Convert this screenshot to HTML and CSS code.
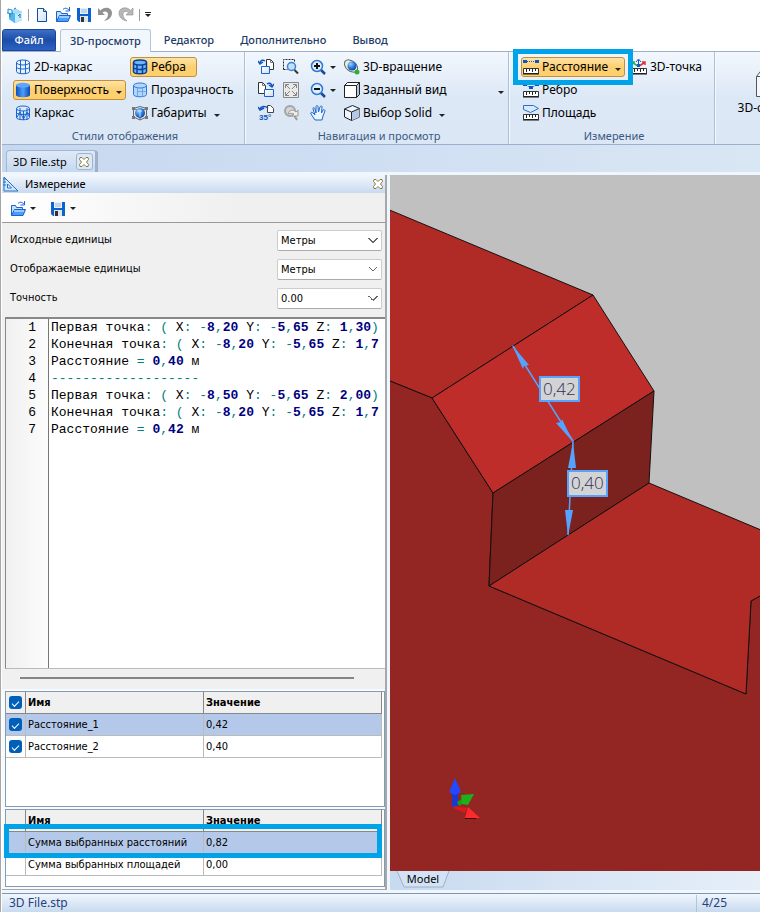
FILE: index.html
```html
<!DOCTYPE html>
<html lang="ru">
<head>
<meta charset="utf-8">
<title>3D File.stp</title>
<link rel="stylesheet" href="styles.css">
</head>
<body>
<svg class="sprite" aria-hidden="true">
  <defs>
    <linearGradient id="blue" x1="0" x2="1" y1="0" y2="0"><stop offset="0" stop-color="#0b4fc4"/><stop offset=".5" stop-color="#4f9cf8"/><stop offset="1" stop-color="#0a49b5"/></linearGradient>
    <linearGradient id="page" x1="0" x2="1" y1="0" y2="1"><stop offset="0" stop-color="#fff"/><stop offset="1" stop-color="#cfdff2"/></linearGradient>
    <radialGradient id="ball" cx=".35" cy=".3" r=".8"><stop offset="0" stop-color="#9fd4ff"/><stop offset=".5" stop-color="#2f7fe0"/><stop offset="1" stop-color="#0a3c9c"/></radialGradient>
  </defs>
  <symbol id="i-app" viewBox="0 0 16 16"><path d="M2 4l7-2 6 3v8l-7 3-6-4z" fill="#3ba4e6"/><path d="M2 4l7-2 6 3-7 2z" fill="#a5e0fa"/><path d="M8 7l7-2v8l-7 3z" fill="#c3ebfc"/><path d="M2 4l6 3v9l-6-4z" fill="#52b7f0"/><path d="M0 6h6M3 3v7M7 2l2-1M11 9l2-2v4" stroke="#1679bd" fill="none"/><path d="M1 2l4 1v4l-4-1z" fill="#e4f7ff" stroke="#2c8dce"/></symbol>
  <symbol id="i-new" viewBox="0 0 16 16"><path d="M3.500 1.500h6l3 3v10h-9z" fill="url(#page)" stroke="#114ba8"/><path d="M9.500 1.500v3h3" fill="#b8d5f6" stroke="#114ba8"/></symbol>
  <symbol id="i-open" viewBox="0 0 16 16"><path d="M1.500 14.500v-10h4l1 2h6v2" fill="#bfe0ff" stroke="#1b62d0"/><path d="M1.500 14.500l3-6h11l-2.500 6z" fill="#48a0fa" stroke="#1b62d0"/><path d="M4 10h10" stroke="#e8f5ff"/><path d="M8 2.500c2-2 4-1.500 6 .500M14.500 0v4h-4" fill="none" stroke="#1b62d0"/></symbol>
  <symbol id="i-save" viewBox="0 0 16 16"><path d="M1 1h14v14H3l-2-2z" fill="#0d62cf"/><path d="M4 1h8v6H4z" fill="#e4f1ff"/><path d="M5 3h6M5 5h6" stroke="#9db8d8"/><path d="M4 9h8v6H4z" fill="#dfe5ec"/><path d="M5 10h3v5H5z" fill="#333"/></symbol>
  <symbol id="i-undo" viewBox="0 0 16 16"><path d="M1 1v7h7L5.500 5.500C8 3.500 11 4.500 11 7.500c0 3-2 4.500-4 6.500 5-1 8-4 8-8 0-5.500-8-7-11.500-2.500z" fill="#929292"/></symbol>
  <symbol id="i-redo" viewBox="0 0 16 16"><path d="M15 1v7H8l2.500-2.500C8 3.500 5 4.500 5 7.500c0 3 2 4.500 4 6.500-5-1-8-4-8-8 0-5.500 8-7 11.500-2.500z" fill="#b8b8b8" stroke="#8e8e8e" stroke-width=".6"/></symbol>
  <symbol id="i-wire2" viewBox="0 0 16 16"><g fill="none" stroke="#1a64cf"><ellipse cx="8" cy="3.500" rx="6.500" ry="2.500"/><path d="M1.500 3.500v9c0 3 13 3 13 0v-9M5.500 6v9M10.500 6v9M5.500 1v9M10.500 1v9M1.500 8.500c2 2 11 2 13 0"/></g></symbol>
  <symbol id="i-surface" viewBox="0 0 16 16"><path d="M1 3v10c0 3 14 3 14 0V3z" fill="url(#blue)"/><ellipse cx="8" cy="3.200" rx="7" ry="2.500" fill="#5ba5fb"/></symbol>
  <symbol id="i-wire" viewBox="0 0 16 16"><g fill="none" stroke="#1a64cf"><ellipse cx="8" cy="3.500" rx="6.500" ry="2.500"/><path d="M1.500 3.500v9c0 3 13 3 13 0v-9M5 3v12M8.500 6v9M12 3v12M1.500 8c3 2 10 2 13 0M1.500 13L5 7l3.500 7L12 7l2.500 5"/></g></symbol>
  <symbol id="i-edges" viewBox="0 0 16 16"><g fill="#73b4f7" stroke="#063f9a" stroke-width="1.500"><path d="M1.500 3.500v9c0 3 13 3 13 0v-9"/><ellipse cx="8" cy="3.500" rx="6.500" ry="2.500"/><path d="M5 6v9M10.500 6v9M1.500 9c3 2 10 2 13 0" fill="none"/></g></symbol>
  <symbol id="i-transp" viewBox="0 0 16 16"><g fill="#b3d5fb" stroke="#2e77d8"><path d="M1.500 3.500v9c0 3 13 3 13 0v-9"/><ellipse cx="8" cy="3.500" rx="6.500" ry="2.500"/><path d="M5.500 5v9M5.500 9.500h8M10.500 6v9" fill="none" stroke="#6ca5ea"/></g></symbol>
  <symbol id="i-bounds" viewBox="0 0 16 16"><path d="M1.500 3.500l6.500-2 6.500 2v8.500l-6.500 3-6.500-3zM8 7v8M1.500 3.500L8 6l6.500-2.500" fill="none" stroke="#666"/><circle cx="8" cy="8" r="5" fill="url(#ball)"/><path d="M8 5v7M6 6h4" stroke="#c8e5ff" fill="none"/><path d="M0 2h3v3H0zM13 2h3v3h-3zM0 11h3v3H0zM13 11h3v3h-3z" fill="#777"/></symbol>
  <symbol id="i-rotl" viewBox="0 0 16 16"><path d="M8.500.500h4l3 3v7h-7z" fill="#fff" stroke="#333"/><path d="M12.500.500v3h3" fill="none" stroke="#777"/><path d="M3.500 7.500h8v7h-8z" fill="url(#page)" stroke="#1b62d0"/><path d="M7 2C5 .500 3 1 2 4M0 2l2 3 3-2" fill="none" stroke="#1156c0" stroke-width="1.500"/></symbol>
  <symbol id="i-rotr" viewBox="0 0 16 16"><path d="M.500.500h4l3 3v8h-7z" fill="#fff" stroke="#333"/><path d="M4.500.500v3h3" fill="none" stroke="#777"/><path d="M6.500 7.500h9v7h-9z" fill="url(#page)" stroke="#1b62d0"/><path d="M9 2c2-1.500 4-1 5 2M11 3l3 2 2-3" fill="none" stroke="#1156c0" stroke-width="1.500"/></symbol>
  <symbol id="i-rot35" viewBox="0 0 16 16"><path d="M9.500.500h3l3 3v4h-6z" fill="#fff" stroke="#444"/><path d="M10 3C7 .500 3 1 2 4M0 2l2 3 4-2" fill="none" stroke="#1156c0" stroke-width="1.500"/><text x="1" y="15" class="tiny">35°</text></symbol>
  <symbol id="i-zoomwin" viewBox="0 0 16 16"><path d="M.500 10.500v-10h11v3M.500 10.500h4" fill="none" stroke="#222" stroke-dasharray="2 1"/><circle cx="8.500" cy="7.500" r="4" fill="#c1e0fd" stroke="#3d7fd2" stroke-width="1.500"/><path d="M11.500 11l3.500 3.500" stroke="#333" stroke-width="2"/></symbol>
  <symbol id="i-fit" viewBox="0 0 16 16"><path d="M.500.500h15v15H.500z" fill="#e9e9e9" stroke="#888"/><path d="M2.500 6V2.500H6M10 2.500h3.500V6M13.500 10v3.500H10M6 13.500H2.500V10M3 3l4 4M13 3L9 7M13 13L9 9M3 13l4-4" fill="none" stroke="#858585"/></symbol>
  <symbol id="i-zoomprev" viewBox="0 0 16 16"><circle cx="7" cy="6" r="5" fill="#d5d5d5" stroke="#a4a4a4" stroke-width="2"/><path d="M11 10l3 5" stroke="#999" stroke-width="2"/><path d="M5 9c1-4 5-5 8-2l2-2v6H9l2-2c-2-1-4-1-6 0z" fill="#eee" stroke="#999"/></symbol>
  <symbol id="i-zoomin" viewBox="0 0 16 16"><path d="M11 11l4 4" stroke="#164a9a" stroke-width="2.500"/><circle cx="7" cy="7" r="5.500" fill="#dceeff" stroke="#2f77d3" stroke-width="1.500"/><path d="M4 7h6M7 4v6" stroke="#111" stroke-width="2"/></symbol>
  <symbol id="i-zoomout" viewBox="0 0 16 16"><path d="M11 11l4 4" stroke="#164a9a" stroke-width="2.500"/><circle cx="7" cy="7" r="5.500" fill="#dceeff" stroke="#2f77d3" stroke-width="1.500"/><path d="M4 7h6" stroke="#111" stroke-width="2"/></symbol>
  <symbol id="i-hand" viewBox="0 0 16 16"><path d="M5 15L1 9c-1-2 1-2 2-1l2 2-2-6c0-2 1-2 2 0l1 4V2c0-2 2-2 2 0l.500 5L10 2c1-2 2-1 2 0l-.500 6L13 5c1-1 2 0 2 1l-2 5-1 4z" fill="#e9f5ff" stroke="#1e66cf"/></symbol>
  <symbol id="i-orbit" viewBox="0 0 16 16"><ellipse cx="7" cy="7" rx="7.500" ry="5" transform="rotate(40 7 7)" fill="#e4ebe2" stroke="#666"/><circle cx="8" cy="7" r="4.500" fill="url(#ball)"/><circle cx="13" cy="13" r="2.500" fill="#2fae39"/></symbol>
  <symbol id="i-view" viewBox="0 0 16 16"><path d="M.500 3.500l3-3h12v12l-3 3H.500z" fill="#fff" stroke="#222"/><path d="M12.500 15.500v-12l3-3v12z" fill="#b4c5df" stroke="#222"/><path d="M.500 3.500h12" stroke="#222"/></symbol>
  <symbol id="i-solid" viewBox="0 0 16 16"><path d="M.500 4l8-3.500 7 3V12l-8 3.500-7-3.500z" fill="#edf5ff" stroke="#222"/><path d="M7.500 7l8-3.500V12l-8 3.500z" fill="#b5c8e4"/><path d="M.500 4l7 3 8-3.500M7.500 7v8.500" fill="none" stroke="#222"/></symbol>
  <symbol id="i-ruler" viewBox="0 0 16 16"><path d="M.500 9.500h15v5H.500z" fill="#fff" stroke="#333"/><path d="M0 15h16" stroke="#111"/><path d="M3.500 10v3M6.500 10v2M9.500 10v3M12.500 10v2" stroke="#222"/></symbol>
  <symbol id="i-dist" viewBox="0 0 16 16"><path d="M0 1h4v3H0zM12 1h4v3h-4z" fill="#0c55c4"/><path d="M4 2.500h8" stroke="#0c55c4" stroke-dasharray="1 1"/><use href="#i-ruler"/></symbol>
  <symbol id="i-edge" viewBox="0 0 16 16"><path d="M0 1h4v3H0zM6 4h4v3H6zM12 1h4v3h-4z" fill="#0c55c4"/><path d="M3 3l5 3 5-3" fill="none" stroke="#0c55c4" stroke-dasharray="1 1"/><use href="#i-ruler"/></symbol>
  <symbol id="i-area" viewBox="0 0 16 16"><path d="M.500.500h10l5 3-8 4-7-3z" fill="#d7e9fc" stroke="#2a6fd0"/><use href="#i-ruler"/></symbol>
  <symbol id="i-point" viewBox="0 0 16 16"><path d="M7.500 8V1M5 3l2.500-3L10 3" fill="none" stroke="#1458cc"/><path d="M7 7L2 4M1 6V3h3" fill="none" stroke="#2bb52b" stroke-width="1.500"/><path d="M8 7l5-3M14 6V3h-3" fill="none" stroke="#e0302a" stroke-width="1.500"/><path d="M6 5h3v3H6z" fill="#1458cc"/><use href="#i-ruler"/></symbol>
  <symbol id="i-box" viewBox="0 0 32 32"><path d="M1.500 10.500l7-9h22v20l-7 9h-22z" fill="#f5f9fe" stroke="#555"/><path d="M1.500 10.500h22v20M23.500 10.500l7-9" fill="none" stroke="#555"/></symbol>
  <symbol id="i-triangle" viewBox="0 0 16 16"><path d="M1 1v14h14z" fill="#cfe6ff" stroke="#2d6ec4"/><path d="M4.500 8v4h4z" fill="#fff" stroke="#2d6ec4"/><path d="M0 3h3M0 6h3M0 9h3" stroke="#2d6ec4"/></symbol>
  <symbol id="i-x" viewBox="0 0 10 10"><path d="M1 .500h2l2 2 2-2h2l.500 2L7.500 5l2 2.500-.500 2H7l-2-2-2 2H1l-.500-2L2.500 5l-2-2.500z" fill="#fff" stroke="#8b7b43"/></symbol>
</svg>

<div class="window">
  <header class="quickbar">
    <svg class="icon"><use href="#i-app"/></svg>
    <span class="rule"></span>
    <button class="bare" aria-label="Создать"><svg class="icon"><use href="#i-new"/></svg></button>
    <button class="bare" aria-label="Открыть"><svg class="icon"><use href="#i-open"/></svg></button>
    <button class="bare" aria-label="Сохранить"><svg class="icon"><use href="#i-save"/></svg></button>
    <button class="bare" aria-label="Отменить"><svg class="icon"><use href="#i-undo"/></svg></button>
    <button class="bare" aria-label="Повторить"><svg class="icon"><use href="#i-redo"/></svg></button>
    <span class="rule"></span>
    <button class="more" aria-label="Настройка панели"><span class="caret"></span></button>
  </header>

  <nav class="tabs">
    <button class="tab file">Файл</button>
    <button class="tab active">3D-просмотр</button>
    <button class="tab">Редактор</button>
    <button class="tab">Дополнительно</button>
    <button class="tab">Вывод</button>
  </nav>

  <section class="ribbon">
    <div class="group styles">
      <div class="cols">
        <div class="col">
          <button class="tool"><svg class="icon"><use href="#i-wire2"/></svg>2D-каркас</button>
          <button class="tool on"><svg class="icon"><use href="#i-surface"/></svg>Поверхность<span class="caret"></span></button>
          <button class="tool"><svg class="icon"><use href="#i-wire"/></svg>Каркас</button>
        </div>
        <div class="col">
          <button class="tool on"><svg class="icon"><use href="#i-edges"/></svg>Ребра</button>
          <button class="tool"><svg class="icon"><use href="#i-transp"/></svg>Прозрачность</button>
          <button class="tool"><svg class="icon"><use href="#i-bounds"/></svg>Габариты<span class="caret"></span></button>
        </div>
      </div>
      <div class="caption">Стили отображения</div>
    </div>

    <div class="group navigation">
      <div class="cols">
        <div class="nav-grid">
          <button class="bare" aria-label="Повернуть влево"><svg class="icon"><use href="#i-rotl"/></svg></button>
          <button class="bare" aria-label="Увеличить область"><svg class="icon"><use href="#i-zoomwin"/></svg></button>
          <button class="bare" aria-label="Увеличить"><svg class="icon"><use href="#i-zoomin"/></svg><span class="caret"></span></button>
          <button class="bare" aria-label="Повернуть вправо"><svg class="icon"><use href="#i-rotr"/></svg></button>
          <button class="bare" aria-label="Вписать"><svg class="icon"><use href="#i-fit"/></svg></button>
          <button class="bare" aria-label="Уменьшить"><svg class="icon"><use href="#i-zoomout"/></svg><span class="caret"></span></button>
          <button class="bare" aria-label="Повернуть на угол"><svg class="icon"><use href="#i-rot35"/></svg></button>
          <button class="bare" aria-label="Предыдущий масштаб"><svg class="icon"><use href="#i-zoomprev"/></svg></button>
          <button class="bare" aria-label="Панорама"><svg class="icon"><use href="#i-hand"/></svg></button>
        </div>
        <div class="col wide">
          <button class="tool"><svg class="icon"><use href="#i-orbit"/></svg>3D-вращение</button>
          <button class="tool spread"><svg class="icon"><use href="#i-view"/></svg>Заданный вид<span class="caret"></span></button>
          <button class="tool"><svg class="icon"><use href="#i-solid"/></svg>Выбор Solid<span class="caret"></span></button>
        </div>
      </div>
      <div class="caption">Навигация и просмотр</div>
    </div>

    <div class="group measuring">
      <div class="cols">
        <div class="col">
          <button class="tool on marked"><svg class="icon"><use href="#i-dist"/></svg>Расстояние<span class="caret"></span></button>
          <button class="tool"><svg class="icon"><use href="#i-edge"/></svg>Ребро</button>
          <button class="tool"><svg class="icon"><use href="#i-area"/></svg>Площадь</button>
        </div>
        <div class="col">
          <button class="tool"><svg class="icon"><use href="#i-point"/></svg>3D-точка</button>
        </div>
      </div>
      <div class="caption">Измерение</div>
    </div>

    <div class="group rest">
      <button class="big"><svg class="icon-big"><use href="#i-box"/></svg>3D-сечение</button>
    </div>
  </section>

  <div class="documents">
    <div class="document">3D File.stp<button class="close" aria-label="Закрыть файл"><svg class="cross"><use href="#i-x"/></svg></button></div>
  </div>

  <main class="workspace">
    <aside class="panel">
      <div class="panel-title">
        <svg class="icon"><use href="#i-triangle"/></svg>
        <span class="grow">Измерение</span>
        <button class="bare" aria-label="Закрыть панель"><svg class="cross"><use href="#i-x"/></svg></button>
      </div>
      <div class="panel-tools">
        <button class="bare" aria-label="Открыть измерения"><svg class="icon"><use href="#i-open"/></svg><span class="caret"></span></button>
        <button class="bare" aria-label="Сохранить измерения"><svg class="icon"><use href="#i-save"/></svg><span class="caret"></span></button>
      </div>
      <form class="settings">
        <label for="source">Исходные единицы</label>
        <select id="source"><option>Метры</option></select>
        <label for="shown">Отображаемые единицы</label>
        <select id="shown"><option>Метры</option></select>
        <label for="precision">Точность</label>
        <select id="precision"><option>0.00</option></select>
      </form>
      <div class="log">
        <ol class="lines">
          <li>Первая точка<i>:</i> <i>(</i> X<i>:</i> <i>-</i><b>8</b><i>,</i><b>20</b> Y<i>:</i> <i>-</i><b>5</b><i>,</i><b>65</b> Z<i>:</i> <b>1</b><i>,</i><b>30</b><i>)</i></li>
          <li>Конечная точка<i>:</i> <i>(</i> X<i>:</i> <i>-</i><b>8</b><i>,</i><b>20</b> Y<i>:</i> <i>-</i><b>5</b><i>,</i><b>65</b> Z<i>:</i> <b>1</b><i>,</i><b>7</b></li>
          <li>Расстояние <i>=</i> <b>0</b><i>,</i><b>40</b> м</li>
          <li><i>-------------------</i></li>
          <li>Первая точка<i>:</i> <i>(</i> X<i>:</i> <i>-</i><b>8</b><i>,</i><b>50</b> Y<i>:</i> <i>-</i><b>5</b><i>,</i><b>65</b> Z<i>:</i> <b>2</b><i>,</i><b>00</b><i>)</i></li>
          <li>Конечная точка<i>:</i> <i>(</i> X<i>:</i> <i>-</i><b>8</b><i>,</i><b>20</b> Y<i>:</i> <i>-</i><b>5</b><i>,</i><b>65</b> Z<i>:</i> <b>1</b><i>,</i><b>7</b></li>
          <li>Расстояние <i>=</i> <b>0</b><i>,</i><b>42</b> м</li>
        </ol>
      </div>
      <div class="scroll"><span></span></div>
      <div class="results">
        <div class="grid-box first">
          <table>
            <thead><tr><th><input type="checkbox" checked aria-label="Выбрать все"></th><th>Имя</th><th>Значение</th></tr></thead>
            <tbody>
              <tr class="selected"><td><input type="checkbox" checked aria-label="Расстояние_1"></td><td>Расстояние_1</td><td>0,42</td></tr>
              <tr><td><input type="checkbox" checked aria-label="Расстояние_2"></td><td>Расстояние_2</td><td>0,40</td></tr>
            </tbody>
          </table>
        </div>
        <div class="grid-box marked">
          <table>
            <thead><tr><th></th><th>Имя</th><th>Значение</th></tr></thead>
            <tbody>
              <tr class="selected"><td></td><td>Сумма выбранных расстояний</td><td>0,82</td></tr>
              <tr><td></td><td>Сумма выбранных площадей</td><td>0,00</td></tr>
            </tbody>
          </table>
        </div>
      </div>
    </aside>

    <section class="viewer">
      <svg class="scene" viewBox="390 175 370 696" preserveAspectRatio="xMinYMin slice" role="img" aria-label="Модель с размерами 0,42 и 0,40">
        <path d="M380 175h400v700H380z" fill="#c0c0c0"/>
        <g stroke="#141010" stroke-linejoin="round">
          <path d="M380 206L593 295 432 398 380 377z" fill="#b02a26"/>
          <path d="M380 377L432 398 493 493 489 586 746 694 751 601 780 585V890H380z" fill="#932622"/>
          <path d="M593 295L654 391 493 493 432 398z" fill="#be2d29"/>
          <path d="M654 391L649 483 489 586 493 493z" fill="#7b211e"/>
          <path d="M649 483L780 538V585L751 601 746 694 489 586z" fill="#b02a26"/>
        </g>
        <g stroke="#55a2ff" stroke-width="1.500" fill="#55a2ff">
          <path d="M513 346L573 441 568 535" fill="none"/>
          <path stroke="none" d="M512 345l17 20-5 1-1 3zM573 442l-17-19 5-1 1-3zM573 442l3 26h-8zM568 536l-3-26h8z"/>
        </g>
        <g fill="#d3d3d3" stroke="#55a2ff" stroke-width="2">
          <path d="M540 377h39v24h-39zM568 471h39v25h-39z"/>
        </g>
        <g class="dimension"><text x="543" y="395">0,42</text><text x="571" y="489">0,40</text></g>
        <g>
          <path d="M452 790h6v16l-4 2-2-2z" fill="#1d38cf"/><path d="M455 778l6 14-6 3-6-3z" fill="#2448ff"/>
          <path d="M457 802l8-5 4 3-10 6z" fill="#18a018"/><path d="M461 795l13-1-6 11-6-1z" fill="#1cb01c"/>
          <path d="M455 806l12 2-2 5-12-5z" fill="#d81a20"/><path d="M468 807l12 11-15 0z" fill="#ff2a30"/><path d="M465 818.500h11" stroke="#300"/>
        </g>
      </svg>
      <div class="sheets"><button class="sheet"><svg class="sheet-edge" viewBox="0 0 54 18"><path d="M1 0l7 16h39l6-16" fill="#d3e3f5" stroke="#9fb0c6"/></svg><span>Model</span></button></div>
    </section>
  </main>

  <footer class="status"><span class="grow">3D File.stp</span><span class="count">4/25</span></footer>
</div>
</body>
</html>
```
FILE: styles.css
```css
*, *::before, *::after { box-sizing: border-box; }

body {
  margin: 0;
  background: #fff;
  color: #000;
  font: 12px/16px "Noto Sans", sans-serif;
}

button {
  padding: 0;
  border: 0;
  background: none;
  color: inherit;
  font: inherit;
}

.sprite { position: absolute; width: 0; height: 0; }
.tiny { font: bold 8px "Liberation Sans", sans-serif; fill: #1156c0; }
.icon { width: 16px; height: 16px; flex: none; display: block; }
.cross { width: 10px; height: 10px; display: block; }
.grow { flex: 1; }

.caret {
  flex: none;
  border: 3px solid transparent;
  border-top-color: #222;
  border-bottom: 0;
}

.window {
  display: flex;
  flex-direction: column;
  min-height: 100vh;
  border-left: 1px solid #a6a6a6;
  padding-left: 1px;
}

.bare { display: flex; align-items: center; gap: 4px; }

/* Quick access bar */
.quickbar {
  display: flex;
  align-items: center;
  height: 29px;
  gap: 5px;
  padding: 0 5px;
}
.rule { width: 1px; height: 12px; background: #999; }
.more { display: flex; flex-direction: column; gap: 1px; }
.more::before { content: ""; width: 6px; height: 1px; background: #222; }

/* Ribbon tabs */
.tabs {
  display: flex;
  height: 23px;
  border-bottom: 1px solid #9ab0cc;
  font-size: 11px;
}
.tab { padding: 0 13px; color: #223b66; font-weight: 500; }
.tab.file {
  width: 54px;
  padding: 0;
  border: 1px solid #1b459b;
  border-radius: 3px 3px 0 0;
  background: linear-gradient(#3c6fc6, #1d4ca8 50%, #2c63c4);
  color: #fff;
}
.tab.active {
  height: 23px;
  margin-left: 4px;
  padding: 0 9px;
  border: 1px solid #b1c4dd;
  border-bottom: 0;
  border-radius: 3px 3px 0 0;
  background: #f2f7fd;
}

/* Ribbon */
.ribbon {
  display: flex;
  height: 93px;
  border-bottom: 1px solid #9ab0cc;
  background: linear-gradient(#f2f7fd, #dce8f6 50%, #dbe7f5);
}
.group {
  position: relative;
  display: flex;
  flex-direction: column;
  flex: none;
  padding-top: 5px;
  border-right: 1px solid #adc0d9;
  box-shadow: 1px 0 #f4f9ff;
}
.group.styles { width: 243px; padding-left: 11px; }
.group.navigation { width: 264px; padding-left: 12px; }
.group.measuring { width: 206px; padding-left: 12px; }
.group.rest { flex: 1; min-width: 0; padding-left: 22px; border: 0; overflow: hidden; }
.cols { display: flex; }
.col { display: flex; flex-direction: column; align-items: flex-start; gap: 3px; }
.styles .col:first-child { width: 117px; }
.measuring .col:first-child { width: 108px; }
.wide { flex: 1; }
.tool {
  position: relative;
  display: flex;
  align-items: center;
  gap: 3px;
  height: 20px;
  padding: 0 3px 0 1px;
  border: 1px solid transparent;
  border-radius: 3px;
  white-space: nowrap;
}
.tool .caret { margin: 4px 0 0 4px; }
.tool.spread { width: 100%; }
.tool.spread .caret { margin-left: auto; }
.tool.on {
  border-color: #c2903c;
  background: linear-gradient(#fde3a6, #fccf72 50%, #ffd06a);
}
.styles .col:last-child .on { padding-right: 10px; }
.tool.marked::after {
  content: "";
  position: absolute;
  inset: -9px;
  z-index: 1;
  border: 5px solid #00a2e8;
}
.caption { padding-top: 5px; color: #3b5a82; font-size: 11px; text-align: center; }
.styles .caption, .navigation .caption, .measuring .caption { margin-left: -7px; }
.nav-grid {
  display: grid;
  grid-template-columns: 25px 25px 34px;
  grid-auto-rows: 20px;
  gap: 3px 0;
  padding-left: 1px;
}
.nav-grid .bare:nth-child(3n) { padding-left: 2px; }
.big { display: flex; flex-direction: column; align-items: center; width: 68px; padding-top: 9px; gap: 2px; white-space: nowrap; }
.icon-big { width: 32px; height: 32px; }

/* Document tabs */
.documents {
  display: flex;
  align-items: flex-end;
  height: 27px;
  padding-left: 4px;
  background: linear-gradient(90deg, #c6d8f0, #d9e6f4);
  font-size: 11px;
}
.document {
  display: flex;
  align-items: center;
  gap: 9px;
  height: 22px;
  padding: 0 2px 0 6px;
  border: 1px solid #a5b7d0;
  border-right: 3px solid #9fb0c9;
  border-bottom: 0;
  border-radius: 4px 4px 0 0;
  background: linear-gradient(#dfeaf8, #c6d8ee);
}
.close {
  display: grid;
  place-items: center;
  width: 17px;
  height: 17px;
  border: 1px solid #9fb4d2;
  border-radius: 3px;
  background: #dce8f6;
}

/* Workspace */
.workspace { flex: 1; display: flex; padding-top: 3px; background: #f0f6fd; }
.panel {
  display: flex;
  flex-direction: column;
  flex: none;
  width: 385px;
  margin: 0 3px 3px 0;
  border-right: 2px solid #a8a8a8;
  border-bottom: 1px solid #a8a8a8;
  background: #f0f0f0;
}
.panel-title {
  display: flex;
  align-items: center;
  gap: 6px;
  height: 18px;
  padding: 0 2px 0 1px;
  background: linear-gradient(#f2f7fd, #c8daf0);
  font-size: 11px;
}
.panel-tools {
  display: flex;
  gap: 14px;
  height: 30px;
  padding: 2px 0 0 8px;
  border-bottom: 1px solid #999;
  background: linear-gradient(90deg, #fff, #f0f0f0 60%);
}
.settings {
  display: grid;
  grid-template-columns: 1fr 105px;
  grid-auto-rows: 21px;
  align-items: center;
  gap: 8px 0;
  padding: 7px 3px 8px 8px;
}
.settings label { padding-bottom: 2px; }
.settings, .results { font: 11px/16px "DejaVu Sans Condensed", "DejaVu Sans", sans-serif; }
.settings select {
  height: 21px;
  padding: 0 3px;
  border: 1px solid #ccc;
  border-bottom-color: #aaa;
  border-radius: 2px;
  appearance: none;
  background-color: #fff;
  background-image: linear-gradient(45deg, transparent 50%, #666 50%, #666 65%, transparent 65%), linear-gradient(-45deg, transparent 50%, #666 50%, #666 65%, transparent 65%);
  background-repeat: no-repeat;
  background-size: 5px 5px;
  background-position: right 8px center, right 3px center;
  color: inherit;
  font: inherit;
}

/* Measurement log */
.log {
  flex: 1;
  overflow: hidden;
  margin-left: 3px;
  border-top: 2px solid #888;
  border-left: 1px solid #888;
  border-bottom: 1px solid #bbb;
  background: linear-gradient(90deg, #f0f0f0, #fcfcfc 42px, #777 42px, #777 43px, #fff 43px);
}
.lines {
  margin: 0;
  padding: 0;
  counter-reset: line;
  list-style: none;
  font: 13px/17px "Liberation Mono", monospace;
}
.lines li { white-space: pre; }
.lines li::before {
  content: counter(line);
  counter-increment: line;
  display: inline-block;
  width: 30px;
  margin-right: 15px;
  text-align: right;
}
.lines i { color: #008080; font-style: normal; }
.lines b { color: #000080; }
.scroll { height: 20px; padding: 8px 31px 0 18px; }
.scroll span { display: block; height: 2px; background: #858585; }

/* Result tables */
.results { display: flex; flex-direction: column; gap: 2px; padding: 2px 0 2px 3px; background: #fafafa; }
.grid-box { position: relative; border: 1px solid #7f9db9; background: #fff; padding-right: 2px; height: 78px; }
.grid-box.first { height: 116px; }
.grid-box table { width: 100%; table-layout: fixed; border-collapse: separate; border-spacing: 0; }
.grid-box th, .grid-box td {
  height: 22px;
  padding: 0 2px;
  border: solid #bbb;
  border-width: 0 1px 1px 0;
  text-align: left;
}
.grid-box th { border-color: #888; background: #f0f0f0; }
.grid-box th:first-child { width: 20px; }
.grid-box th:nth-child(2) { width: 178px; }
.grid-box .selected td { background: #b4c9e9; }
.grid-box.marked::after {
  content: "";
  position: absolute;
  inset: 14px 2px auto -2px;
  height: 34px;
  border: 5px solid #00a2e8;
}
.grid-box input {
  display: grid;
  place-items: center;
  width: 13px;
  height: 13px;
  margin: 0 1px;
  appearance: none;
  border-radius: 3px;
  background: #005fb8;
}
.grid-box input::after {
  content: "";
  width: 7px;
  height: 4px;
  border: solid #fff;
  border-width: 0 0 1px 1px;
  transform: rotate(-45deg);
}

/* Viewer */
.viewer { display: flex; flex-direction: column; flex: 1; min-width: 0; }
.scene { flex: 1; display: block; width: 100%; height: 0; min-height: 0; }
.dimension { font: 300 17px "Open Sans", sans-serif; fill: #30305e; }
.sheets { height: 19px; margin-bottom: 3px; padding-left: 6px; background: linear-gradient(90deg, #c8daf0, #e6eff8); }
.sheet { display: grid; width: 54px; height: 18px; font-size: 11px; }
.sheet > * { grid-area: 1 / 1; }
.sheet-edge { width: 54px; height: 18px; }

/* Status bar */
.status {
  display: flex;
  height: 19px;
  padding: 1px 0 0 7px;
  border-top: 1px solid #7f95b3;
  background: linear-gradient(#f0f6fd, #c8daef);
  color: #25427c;
}
.count { width: 64px; padding-left: 5px; border-left: 1px solid #b1c4dd; }
```
